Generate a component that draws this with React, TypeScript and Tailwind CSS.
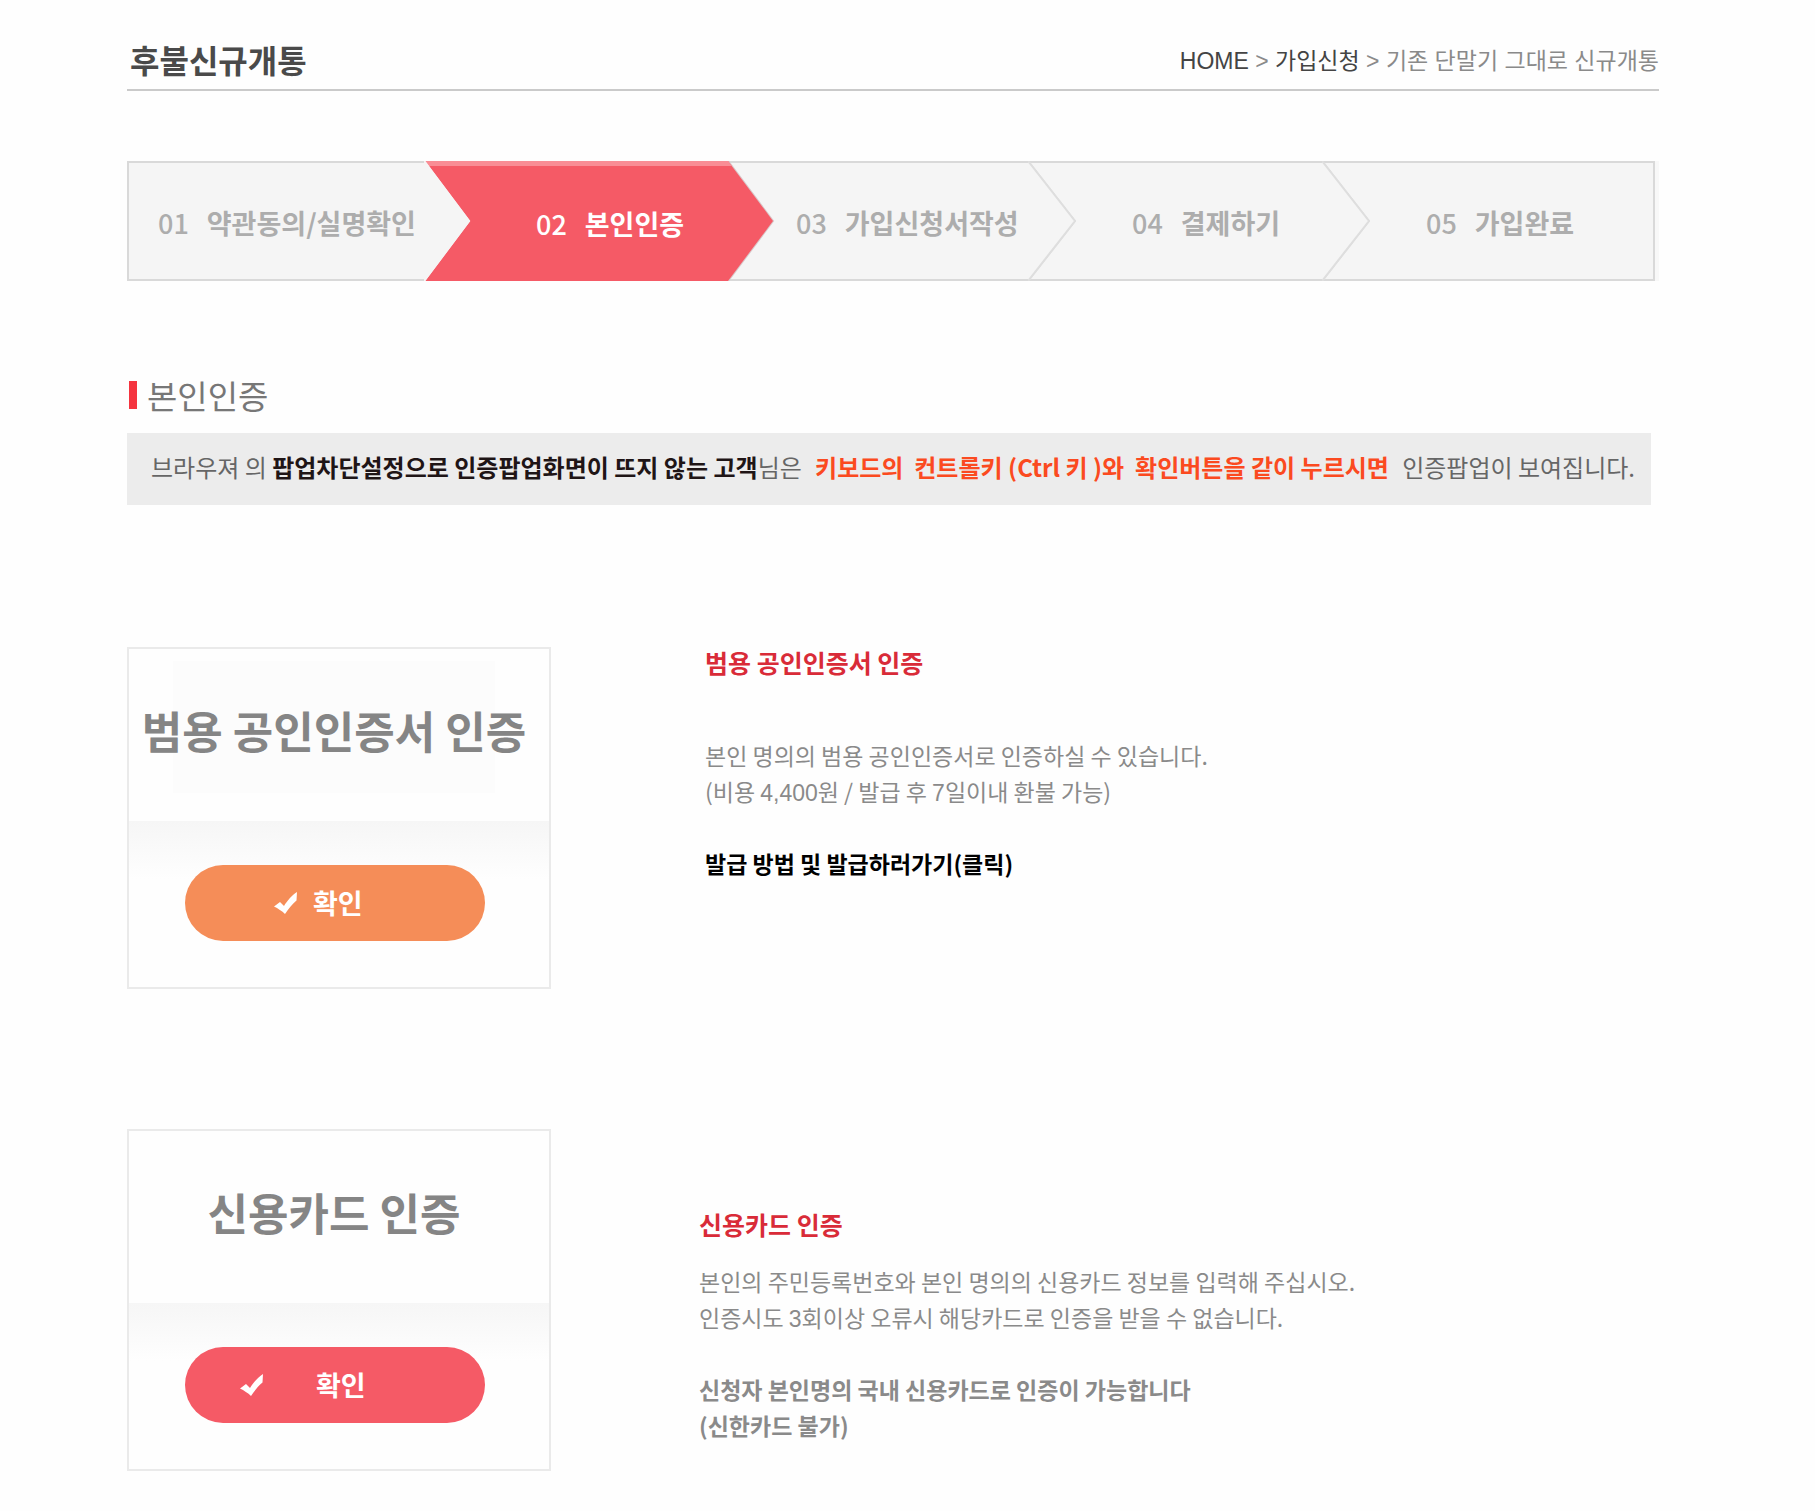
import React from "react";

const steps = [
  { no: "01", label: "약관동의/실명확인", box: "flex-[297_1_0%] z-50", pad: "pl-[29px]", tip: 45, line: "#f5f5f5" },
  { no: "02", label: "본인인증", box: "flex-[304_1_0%] z-40", pad: "pl-[112px]", active: true, tip: 45, line: "#d8c8ca" },
  { no: "03", label: "가입신청서작성", box: "flex-[300_1_0%] z-30", pad: "pl-[68px]", tip: 47, line: "#dedede" },
  { no: "04", label: "결제하기", box: "flex-[294_1_0%] z-20", pad: "pl-[104px]", tip: 47, line: "#dedede" },
  { no: "05", label: "가입완료", box: "flex-[333_1_0%] z-10", pad: "pl-[104px]", last: true, tip: 0, line: "" },
];

function StepArrow({ active, tip, line }: { active?: boolean; tip: number; line: string }) {
  const edge = `M0 0 L${tip} 60 L0 120`;
  return (
    <svg
      className="absolute left-full top-0 h-full w-12"
      viewBox="0 0 48 120"
      preserveAspectRatio="none"
      aria-hidden="true"
    >
      <path d={edge} fill="none" stroke={line} strokeWidth="2" />
      <path d={`${edge} H-1 V0 Z`} fill={active ? "#f55a66" : "#f5f5f5"} />
      {active && <path d="M-1 0 H0 L4 5 H-1 Z" fill="#f98d95" />}
      {!active && <path d={edge} fill="none" stroke={line} strokeWidth="2" />}
    </svg>
  );
}

function CheckMark() {
  return (
    <svg className="h-[22px] w-6" viewBox="0 0 24 22" fill="#fff" aria-hidden="true">
      <path d="M0 14.500 L6 10 L10 14 C13 9 18 3 23 0 L22.500 8.500 C18 12 14.500 17 11 22 C8 19 4 16.500 0 14.500 Z" />
    </svg>
  );
}

function Digits({ children }: { children: React.ReactNode }) {
  return <span className="font-['Liberation_Sans',sans-serif] leading-none">{children}</span>;
}

function AuthCard({
  title,
  titleBox,
  button,
}: {
  title: string;
  titleBox: string;
  button: React.ReactNode;
}) {
  return (
    <div className="flex h-[342px] w-[424px] shrink-0 flex-col border-2 border-[#eaeaea]">
      <div className="flex h-[172px] items-start pl-11 pt-3">
        <div className={titleBox}>
          <strong className="whitespace-nowrap text-[44px] font-bold leading-[56px] text-[#858585]">{title}</strong>
        </div>
      </div>
      <div className="flex-1 bg-linear-to-b from-[#f6f6f6] to-[#fefefe] to-35% pl-14 pt-[44px]">{button}</div>
    </div>
  );
}

export default function App() {
  return (
    <main className="min-h-screen bg-[#fefefe] pb-10 pl-[127px] pr-[156px] font-['Noto_Sans_CJK_KR',sans-serif]">
      <header className="flex h-[91px] items-end justify-between border-b-2 border-[#cacaca] pb-2">
        <h1 className="pb-0.5 pl-[3px] text-[32px] font-bold leading-[40px] text-[#4a4a4a]">후불신규개통</h1>
        <nav
          aria-label="breadcrumb"
          className="pb-0.5 font-['Liberation_Sans','Noto_Sans_CJK_KR',sans-serif] text-[23px] leading-[36px] text-[#8a8a8a]"
        >
          <a href="#home" className="text-[#444]">HOME</a> &gt;{" "}
          <a href="#join" className="text-[#444]">가입신청</a> &gt; 기존 단말기 그대로 신규개통
        </nav>
      </header>

      <ol className="mt-[70px] flex h-[120px] border-r-4 border-[#f8f8f8] text-[27px] font-bold leading-[36px]">
        {steps.map((s) => (
          <li key={s.no} className={`relative ${s.box}`} aria-current={s.active ? "step" : undefined}>
            <div
              className={`flex h-full items-center gap-[18px] whitespace-nowrap ${s.pad} ${
                s.active
                  ? "border-t-5 border-[#f98d95] bg-[#f55a66] text-white"
                  : "border-y-2 border-[#d9d9d9] bg-[#f5f5f5] pt-1 text-[#adadad]"
              } ${s.no === "01" ? "border-l-2" : ""} ${s.last ? "border-r-2" : ""}`}
            >
              <span className="font-medium">{s.no}</span>
              <span>{s.label}</span>
            </div>
            {!s.last && <StepArrow active={s.active} tip={s.tip} line={s.line} />}
          </li>
        ))}
      </ol>

      <section>
        <h2 className="mt-[90px] flex h-12 items-center gap-[10px] pl-0.5 text-[33px] leading-[48px] text-[#777]">
          <span className="h-7 w-2 bg-[#f5343f]" />
          본인인증
        </h2>
        <p className="mr-2 mt-[14px] flex h-[72px] items-center justify-between whitespace-nowrap bg-[#ececec] pb-1 pl-6 pr-4 text-[24px] leading-[36px] text-[#666]">
          <span>
            브라우져 의 <b className="text-[#1f1516]">팝업차단설정으로 인증팝업화면이 뜨지 않는 고객</b>님은
          </span>
          <b className="whitespace-pre text-[#fb4a20]">키보드의  컨트롤키 (Ctrl 키 )와  확인버튼을 같이 누르시면</b>
          <span>인증팝업이 보여집니다.</span>
        </p>

        <div className="mt-[142px] flex gap-[154px]">
          <AuthCard
            title="범용 공인인증서 인증"
            titleBox="flex h-[132px] w-[322px] items-center justify-center bg-[#fcfcfc] pt-1.5"
            button={
              <button
                type="button"
                className="flex h-[76px] w-[300px] items-center gap-[15px] rounded-full bg-[#f58d58] pl-[89px] text-[27px] font-bold leading-[36px] text-white"
              >
                <CheckMark />
                확인
              </button>
            }
          />
          <div className="text-[23px] leading-[36px] text-[#8a8a8a]">
            <h3 className="text-[25px] font-bold leading-[30px] text-[#d92b38]">범용 공인인증서 인증</h3>
            <p className="mt-[60px]">
              본인 명의의 범용 공인인증서로 인증하실 수 있습니다.
              <br />
              (비용 <Digits>4,400</Digits>원 / 발급 후 <Digits>7</Digits>일이내 환불 가능)
            </p>
            <a href="#issue" className="mt-9 block font-bold text-black">
              발급 방법 및 발급하러가기(클릭)
            </a>
          </div>
        </div>

        <div className="mt-[140px] flex gap-[148px]">
          <AuthCard
            title="신용카드 인증"
            titleBox="flex h-[132px] w-[322px] items-center justify-center pt-1.5"
            button={
              <button
                type="button"
                className="flex h-[76px] w-[300px] items-center gap-[52px] rounded-full bg-[#f55a66] pl-[55px] text-[27px] font-bold leading-[36px] text-white"
              >
                <CheckMark />
                확인
              </button>
            }
          />
          <div className="pt-20 text-[23px] leading-[36px] text-[#8a8a8a]">
            <h3 className="text-[25px] font-bold leading-[30px] text-[#d92b38]">신용카드 인증</h3>
            <p className="mt-6">
              본인의 주민등록번호와 본인 명의의 신용카드 정보를 입력해 주십시오.
              <br />
              인증시도 <Digits>3</Digits>회이상 오류시 해당카드로 인증을 받을 수 없습니다.
            </p>
            <p className="mt-9 font-bold">
              신청자 본인명의 국내 신용카드로 인증이 가능합니다
              <br />
              (신한카드 불가)
            </p>
          </div>
        </div>
      </section>
    </main>
  );
}
